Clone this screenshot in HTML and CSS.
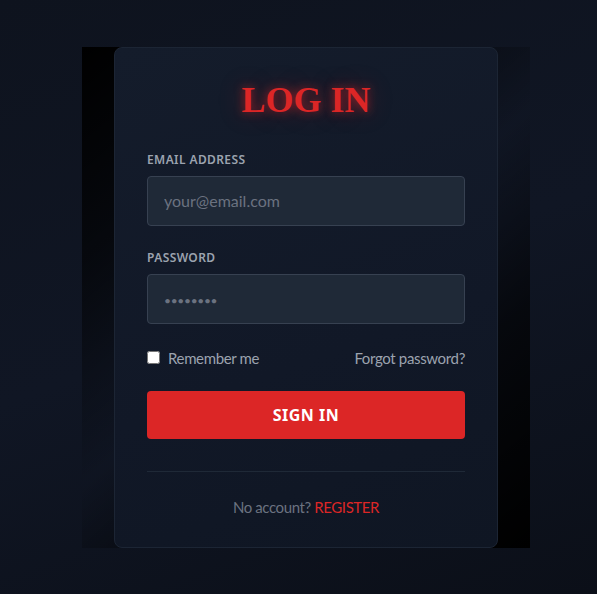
FILE: index.html
```html
<!DOCTYPE html>
<html lang="en">
<head>
<meta charset="utf-8">
<title>Log in</title>
<link rel="stylesheet" href="styles.css">
</head>
<body>
<div class="frame">
  <form class="card">
    <h1 class="title">LOG IN</h1>
    <div class="field">
      <label class="label" for="email">EMAIL ADDRESS</label>
      <input class="input" id="email" type="email" placeholder="your@email.com">
    </div>
    <div class="field">
      <label class="label" for="pw">PASSWORD</label>
      <input class="input input-pw" id="pw" type="password" placeholder="••••••••">
    </div>
    <div class="row">
      <label class="remember"><input type="checkbox" class="check"> Remember me</label>
      <a class="forgot" href="#">Forgot password?</a>
    </div>
    <button class="btn" type="button">SIGN IN</button>
    <div class="divider"></div>
    <p class="foot">No account? <a class="reg" href="#">REGISTER</a></p>
  </form>
</div>
</body>
</html>
```
FILE: styles.css
```css
* { box-sizing: border-box; }
html, body { height: 100%; }
body {
  margin: 0;
  min-height: 100vh;
  display: flex;
  align-items: center;
  justify-content: center;
  padding-left: 15px;
  background: linear-gradient(160deg, #0e131e 0%, #101624 50%, #0b0f18 100%);
  font-family: "Lato", "Noto Sans", sans-serif;
}
.frame {
  width: 448px;
  height: 501px;
  padding: 0 32px;
  flex-shrink: 0;
  background: linear-gradient(140deg, #000 0%, rgba(0,0,0,0.6) 25%, rgba(0,0,0,0) 50%, rgba(0,0,0,0.6) 72%, #000 100%);
}
.card {
  width: 384px;
  height: 501px;
  border: 1px solid #1c2534;
  border-radius: 8px;
  background: linear-gradient(160deg, #141c2b 0%, #111827 60%, #0f1623 100%);
  padding: 30px 32px 0;
  display: flex;
  flex-direction: column;
}
.card > * { flex-shrink: 0; }
.title {
  margin: 0 0 30px;
  text-align: center;
  font-family: "Liberation Serif", "Times New Roman", serif;
  font-weight: 700;
  font-size: 36px;
  line-height: 44px;
  color: #dc2626;
  text-shadow: 0 0 10px rgba(220, 38, 38, 0.65), 0 0 24px rgba(220, 38, 38, 0.35);
}
.field { margin-bottom: 24px; display: flex; flex-direction: column; }
.label {
  font-family: "Noto Sans", sans-serif;
  font-size: 12px;
  font-weight: 600;
  letter-spacing: 0.4px;
  color: #9ca3af;
  line-height: 16px;
  margin-bottom: 8px;
}
.input {
  height: 50px;
  width: 100%;
  background: #1f2937;
  border: 1px solid #374151;
  border-radius: 4px;
  padding: 0 16px;
  font-family: inherit;
  font-size: 16px;
  color: #e5e7eb;
  outline: none;
}
.input::placeholder { color: #6b7280; }
.input-pw::placeholder { font-size: 12px; letter-spacing: -0.3px; }
.row {
  display: flex;
  justify-content: space-between;
  align-items: center;
  height: 20px;
  font-size: 15px;
  letter-spacing: -0.35px;
  color: #9ca3af;
}
.remember { display: flex; align-items: center; gap: 8px; }
.check { width: 13px; height: 13px; margin: 0; }
.forgot { color: #9ca3af; text-decoration: none; }
.btn {
  margin-top: 23px;
  height: 48px;
  width: 100%;
  border: 0;
  border-radius: 4px;
  background: #dc2626;
  color: #fff;
  font-family: "Noto Sans", sans-serif;
  font-weight: 700;
  font-size: 16px;
  letter-spacing: 0.5px;
}
.divider { margin-top: 32px; height: 1px; background: #1f2937; }
.foot {
  margin: 25px 0 0;
  line-height: 20px;
  text-align: center;
  font-size: 15px;
  letter-spacing: -0.4px;
  color: #6b7280;
}
.reg { color: #dc2626; text-decoration: none; }
```
